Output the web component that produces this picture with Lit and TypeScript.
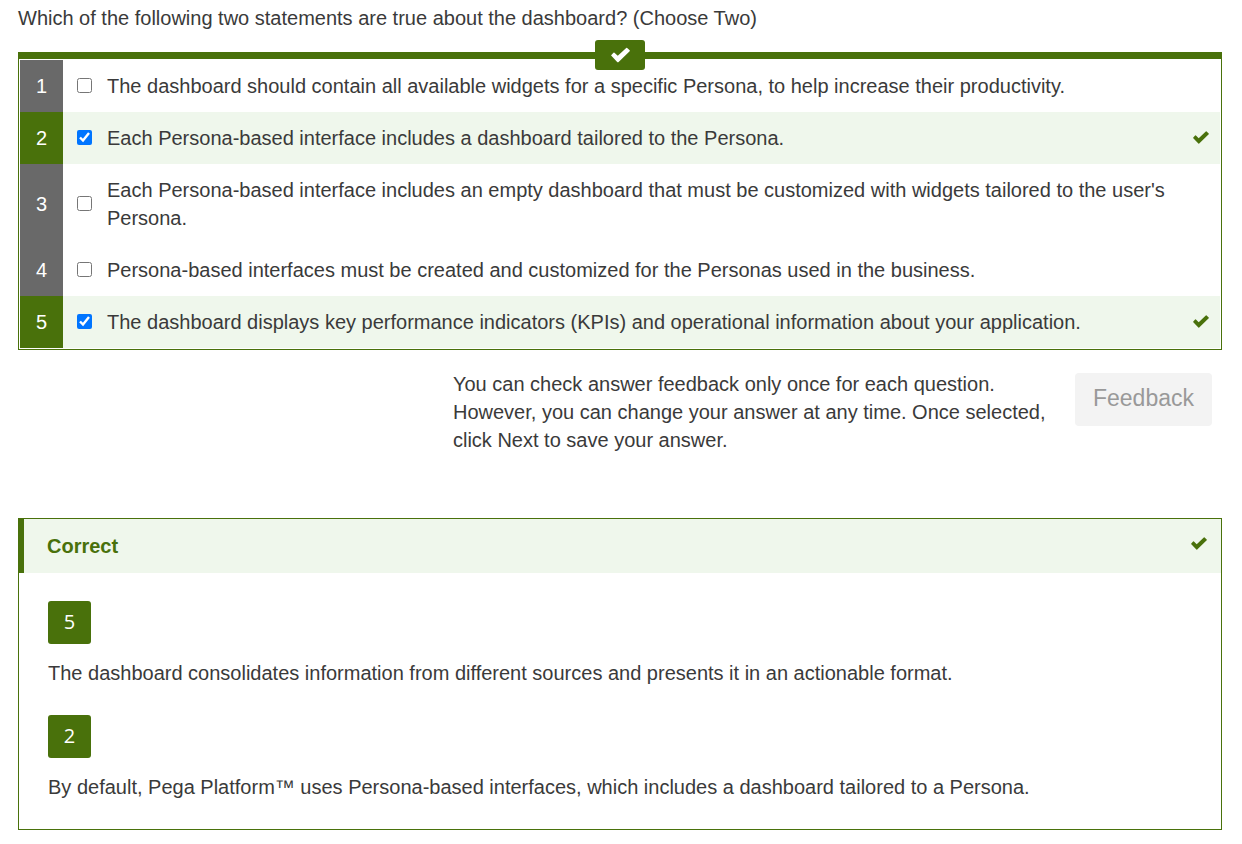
import { LitElement, html, css, svg } from "lit";
import { customElement } from "lit/decorators.js";
import { classMap } from "lit/directives/class-map.js";

interface Option {
  text: string;
  chosen: boolean;
}

const options: Option[] = [
  { text: "The dashboard should contain all available widgets for a specific Persona, to help increase their productivity.", chosen: false },
  { text: "Each Persona-based interface includes a dashboard tailored to the Persona.", chosen: true },
  { text: "Each Persona-based interface includes an empty dashboard that must be customized with widgets tailored to the user's Persona.", chosen: false },
  { text: "Persona-based interfaces must be created and customized for the Personas used in the business.", chosen: false },
  { text: "The dashboard displays key performance indicators (KPIs) and operational information about your application.", chosen: true },
];

const explanations = [
  { option: 5, text: "The dashboard consolidates information from different sources and presents it in an actionable format." },
  { option: 2, text: "By default, Pega Platform™ uses Persona-based interfaces, which includes a dashboard tailored to a Persona." },
];

const tick = () => html`<svg class="tick" viewBox="0 0 16 13" aria-hidden="true">
  ${svg`<path d="M.3 6.400 2.100 4.500q.4-.4.800 0L5.700 7.200 12.800.500q.4-.4.800 0L15.700 2.500q.4.400 0 .800L6.200 12.500q-.4.4-.800 0L.3 7.200q-.4-.4 0-.8Z" fill="currentColor"/>`}
</svg>`;

@customElement("app-root")
export class AppRoot extends LitElement {
  static styles = css`
    :host {
      display: block;
      padding: 4px 20px 14px 18px;
      background: #fff;
      color: #3a3a3a;
      font: 20px/28px "Liberation Sans", Arial, sans-serif;
    }
    * {
      box-sizing: border-box;
    }
    .question {
      margin: 0 0 20px;
    }
    .quiz {
      position: relative;
      margin: 0;
      padding: 1px;
      border: 1px solid #49710b;
      border-top-width: 7px;
    }
    .status {
      position: absolute;
      top: -19px;
      left: 50%;
      transform: translateX(-50%);
      display: flex;
      align-items: center;
      justify-content: center;
      width: 50px;
      height: 30px;
      border-radius: 3px;
      background: #49710b;
    }
    .option {
      display: flex;
      align-items: stretch;
    }
    .number {
      flex: none;
      display: flex;
      align-items: center;
      justify-content: center;
      width: 43px;
      background: #696969;
      color: #fff;
    }
    .choice {
      flex: 1;
      display: flex;
      align-items: center;
      padding: 12px 11px 12px 14px;
    }
    .chosen .number {
      background: #49710b;
    }
    .chosen .choice {
      background: #eff7ec;
    }
    .box {
      flex: none;
      width: 15px;
      height: 15px;
      margin: 0 15px 1px 0;
    }
    .text {
      flex: 1;
      padding-right: 20px;
    }
    .tick {
      flex: none;
      width: 16px;
      height: 13px;
      margin-bottom: 1px;
      color: #49710b;
    }
    .status .tick {
      width: 19px;
      height: 16px;
      margin: 0;
      color: #fff;
    }
    .actions {
      display: flex;
      justify-content: flex-end;
      align-items: flex-start;
      gap: 22px;
      margin: 20px 10px 64px 0;
    }
    .note {
      width: 600px;
      margin: 0;
    }
    .feedback {
      margin-top: 3px;
      padding: 11px 18px 13px;
      border: 0;
      border-radius: 4px;
      background: #f3f3f3;
      color: #999;
      font: 23px/29px "Liberation Sans", Arial, sans-serif;
    }
    .result {
      border: 1px solid #49710b;
    }
    .result-head {
      display: flex;
      align-items: center;
      justify-content: space-between;
      margin-left: -1px;
      padding: 13px 14px 13px 23px;
      border-left: 6px solid #49710b;
      background: #eff7ec;
      color: #49710b;
    }
    .result-head .tick {
      margin-bottom: 5px;
    }
    .result-title {
      margin: 0;
      font-size: 20px;
    }
    .result-body {
      padding: 28px 29px;
    }
    .badge {
      display: flex;
      align-items: center;
      justify-content: center;
      width: 43px;
      height: 43px;
      padding-bottom: 2px;
      border-radius: 3px;
      background: #49710b;
      color: #fff;
      font-family: "Open Sans", "Liberation Sans", sans-serif;
      font-weight: 500;
    }
    .explanation {
      margin: 15px 0 28px;
    }
    .explanation:last-child {
      margin-bottom: 0;
    }
  `;

  render() {
    return html`
      <p class="question" id="question">Which of the following two statements are true about the dashboard? (Choose Two)</p>
      <div class="quiz" role="group" aria-labelledby="question">
        <div class="status">${tick()}</div>
        ${options.map(
          (o, i) => html`<div class=${classMap({ option: true, chosen: o.chosen })}>
            <div class="number">${i + 1}</div>
            <div class="choice">
              <input class="box" type="checkbox" id="option-${i + 1}" ?checked=${o.chosen} />
              <label class="text" for="option-${i + 1}">${o.text}</label>
              ${o.chosen ? tick() : null}
            </div>
          </div>`
        )}
      </div>
      <div class="actions">
        <p class="note">You can check answer feedback only once for each question. However, you can change your answer at any time. Once selected, click Next to save your answer.</p>
        <button class="feedback" type="button" disabled>Feedback</button>
      </div>
      <section class="result">
        <header class="result-head">
          <h2 class="result-title">Correct</h2>
          ${tick()}
        </header>
        <div class="result-body">
          ${explanations.map(
            (e) => html`<div class="badge">${e.option}</div>
              <p class="explanation">${e.text}</p>`
          )}
        </div>
      </section>
    `;
  }
}
